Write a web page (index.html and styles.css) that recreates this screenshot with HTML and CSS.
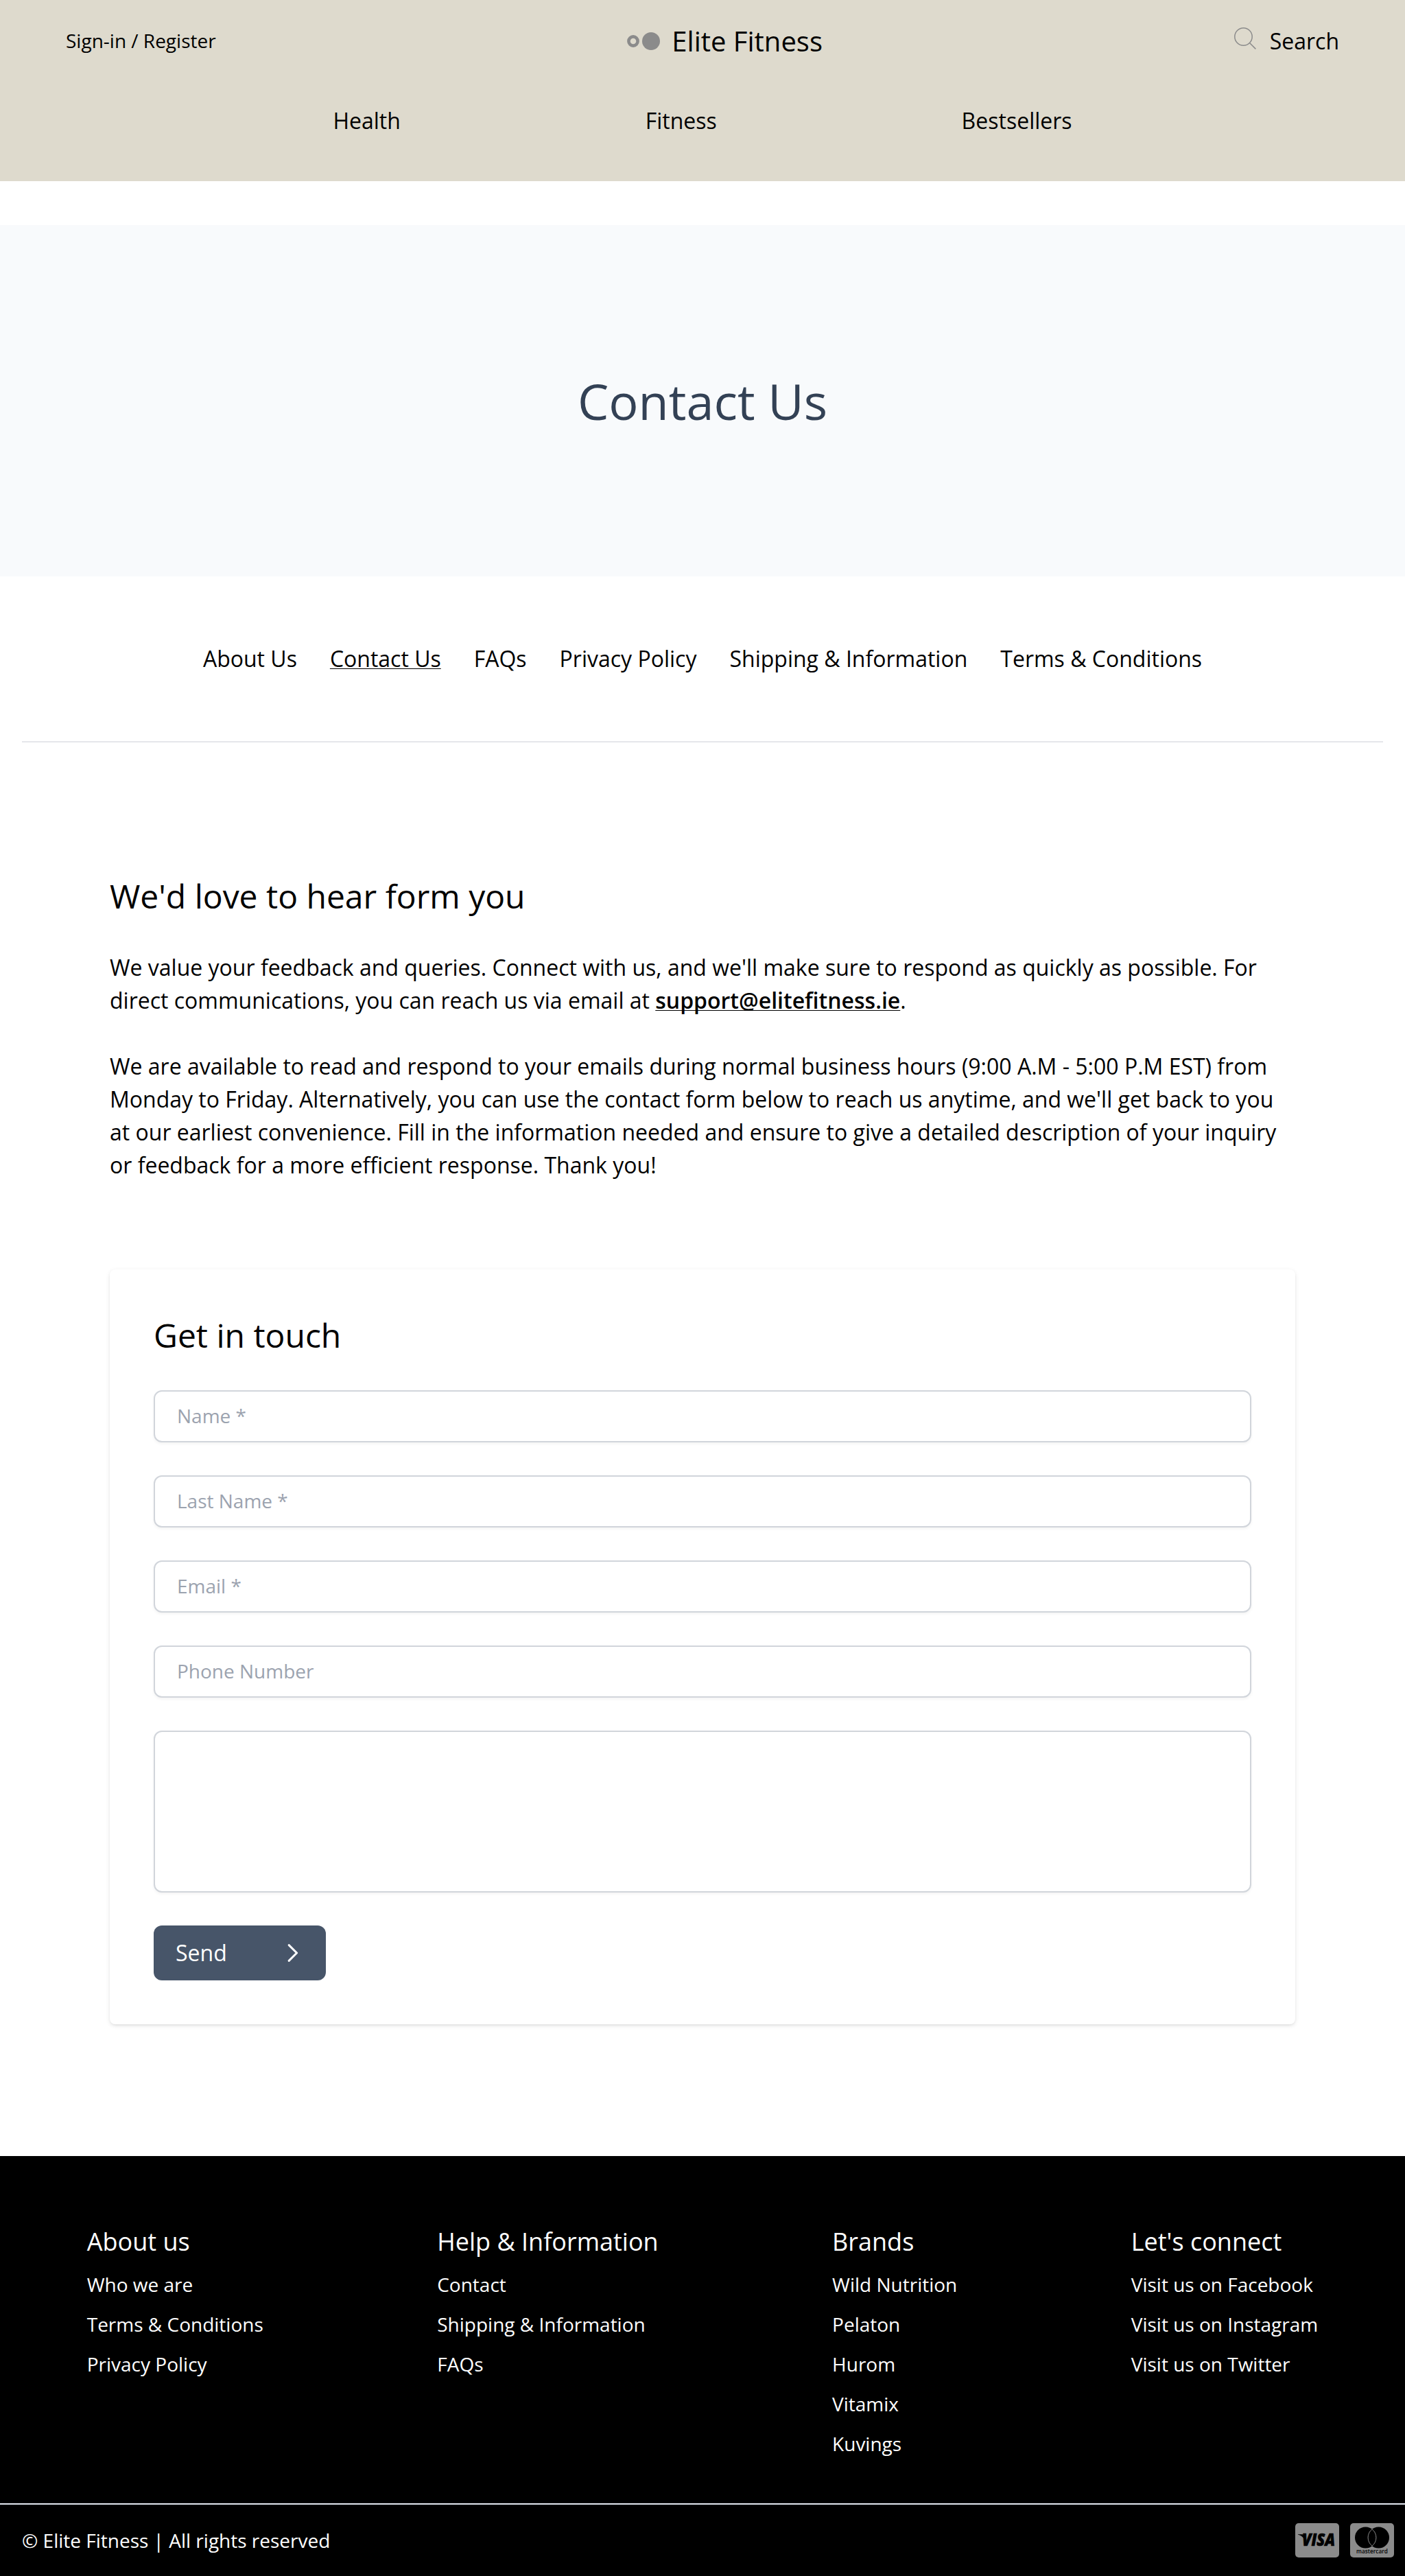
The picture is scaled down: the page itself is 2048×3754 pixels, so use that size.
FILE: index.html
```html
<!DOCTYPE html>
<html lang="en">
<head>
<meta charset="utf-8">
<title>Contact Us | Elite Fitness</title>
<link rel="stylesheet" href="styles.css">
</head>
<body>
<header class="header">
  <div class="header-top">
    <a class="signin">Sign-in / Register</a>
    <a class="brand">
      <svg class="brand-mark" viewBox="0 0 48 26"><circle cx="9" cy="13" r="6.6" fill="none" stroke="#8b8b8b" stroke-width="4.6"/><circle cx="35" cy="13" r="13" fill="#8b8b8b"/></svg>
      <span>Elite Fitness</span>
    </a>
    <a class="search">
      <svg class="search-icon" viewBox="0 0 32 32" fill="none" stroke="#8b8b8b" stroke-width="1.5"><circle cx="13.5" cy="13.5" r="12.7"/><path d="M22.5 22.5 31.4 31.4"/></svg>
      <span>Search</span>
    </a>
  </div>
  <nav class="main-nav"><a>Health</a><a>Fitness</a><a>Bestsellers</a></nav>
</header>

<section class="hero"><h1>Contact Us</h1></section>

<nav class="sub-nav">
  <a>About Us</a><a class="current">Contact Us</a><a>FAQs</a><a>Privacy Policy</a><a>Shipping &amp; Information</a><a>Terms &amp; Conditions</a>
</nav>

<main class="content">
  <h2>We'd love to hear form you</h2>
  <p>We value your feedback and queries. Connect with us, and we'll make sure to respond as quickly as possible. For direct communications, you can reach us via email at <a class="email">support@elitefitness.ie</a>.</p>
  <p>We are available to read and respond to your emails during normal business hours (9:00 A.M - 5:00 P.M EST) from Monday to Friday. Alternatively, you can use the contact form below to reach us anytime, and we'll get back to you at our earliest convenience. Fill in the information needed and ensure to give a detailed description of your inquiry or feedback for a more efficient response. Thank you!</p>

  <form class="card">
    <h2>Get in touch</h2>
    <input class="field" type="text" placeholder="Name *">
    <input class="field" type="text" placeholder="Last Name *">
    <input class="field" type="email" placeholder="Email *">
    <input class="field" type="text" placeholder="Phone Number">
    <textarea class="field message"></textarea>
    <button class="send" type="button">
      <span>Send</span>
      <svg class="chevron" viewBox="0 0 16 26" fill="none" stroke="#fff" stroke-width="3" stroke-linecap="round" stroke-linejoin="round"><path d="M2.2 1.6 13.6 13 2.2 24.4"/></svg>
    </button>
  </form>
</main>

<footer class="footer">
  <div class="footer-columns">
    <div class="column"><h3>About us</h3><a>Who we are</a><a>Terms &amp; Conditions</a><a>Privacy Policy</a></div>
    <div class="column"><h3>Help &amp; Information</h3><a>Contact</a><a>Shipping &amp; Information</a><a>FAQs</a></div>
    <div class="column"><h3>Brands</h3><a>Wild Nutrition</a><a>Pelaton</a><a>Hurom</a><a>Vitamix</a><a>Kuvings</a></div>
    <div class="column"><h3>Let's connect</h3><a>Visit us on Facebook</a><a>Visit us on Instagram</a><a>Visit us on Twitter</a></div>
  </div>
  <div class="footer-bottom">
    <span>© Elite Fitness | All rights reserved</span>
    <div class="payments">
      <svg class="payment" viewBox="0 0 64 50"><rect width="64" height="50" rx="5" fill="#8b8b8b"/><path d="M4 16.3h6.5c1.600 0 2.500.800 2.800 2.200l1.700 7.500c-2-4.500-6-8-11-9.300z"/><text x="10" y="33.300" class="visa" textLength="48" lengthAdjust="spacingAndGlyphs">VISA</text></svg>
      <svg class="payment" viewBox="0 0 64 50"><rect width="64" height="50" rx="5" fill="#8b8b8b"/><circle cx="22.5" cy="21" r="15.5"/><circle cx="41.5" cy="21" r="15.5"/><path d="M32 8.800a15.500 15.500 0 0 1 0 24.400a15.500 15.500 0 0 1 0-24.400z" fill="#000" stroke="#8b8b8b" stroke-width="1"/><text x="9" y="44" class="mastercard" textLength="46" lengthAdjust="spacingAndGlyphs">mastercard</text></svg>
    </div>
  </div>
</footer>
</body>
</html>
```
FILE: styles.css
```css
* { box-sizing: border-box; }
body { margin: 0; background: #fff; color: #000; font: 32px/48px "Open Sans", sans-serif; }
h1, h2, h3, p { margin: 0; font-weight: 400; }

.header { height: 264px; background: #dedacd; }
.header-top { display: flex; align-items: center; justify-content: space-between; height: 120px; padding: 0 96px; }
.signin { padding-bottom: 2px; font-size: 28px; line-height: 40px; }
.brand { display: flex; align-items: center; gap: 17px; font-size: 40px; line-height: 56px; }
.brand-mark { display: block; width: 48px; height: 26px; }
.search { display: flex; align-items: center; gap: 20px; }
.search-icon { display: block; width: 32px; height: 32px; margin-bottom: 8px; }
.main-nav { display: flex; justify-content: space-around; width: 1434px; margin: 0 auto; padding-top: 32px; }

.hero { display: flex; align-items: center; justify-content: center; height: 512px; margin-top: 64px; background: #f8fafc; color: #334155; }
.hero h1 { font-size: 72px; line-height: 80px; }

.sub-nav { display: flex; justify-content: center; gap: 48px; margin: 0 32px; padding: 96px 0; border-bottom: 2px solid #e5e7eb; }
.current, .email { text-decoration: underline 1px; text-underline-offset: 2px; text-decoration-skip-ink: none; }

.content { padding: 192px 160px; }
.content h2 { font-size: 48px; line-height: 64px; }
.content > h2 { margin-bottom: 48px; }
.content p { margin-bottom: 48px; }
.email { font-weight: 600; }

.card { display: flex; flex-direction: column; gap: 48px; margin-top: 128px; padding: 64px; border-radius: 8px; box-shadow: 0 2px 6px rgba(0, 0, 0, .1), 0 2px 4px -2px rgba(0, 0, 0, .1); }
.field { display: block; width: 100%; height: 76px; padding: 15px 32px 17px; border: 2px solid #d1d5db; border-radius: 12px; background: #fff; box-shadow: 0 2px 4px rgba(0, 0, 0, .05); color: #000; font: 28px/40px "Open Sans", sans-serif; }
.field::placeholder { color: #9ca3af; opacity: 1; }
.message { height: 236px; resize: none; }
.send { display: flex; align-items: center; justify-content: space-between; width: 251px; height: 80px; padding: 0 40px 0 32px; border: 0; border-radius: 12px; background: #475569; color: #fff; font: 32px/48px "Open Sans", sans-serif; }
.chevron { display: block; width: 16px; height: 26px; }

.footer { background: #000; color: #fff; }
.footer-columns { display: flex; justify-content: space-around; height: 506px; padding-top: 97px; }
.column { display: flex; flex-direction: column; gap: 18px; }
.column h3 { margin-bottom: -4px; font-size: 36px; line-height: 56px; }
.column a { font-size: 28px; line-height: 40px; }
.footer-bottom { display: flex; align-items: center; justify-content: space-between; height: 106px; padding: 0 16px 0 32px; border-top: 2px solid #e2e8f0; font-size: 28px; line-height: 40px; }
.payments { display: flex; gap: 16px; }
.payment { display: block; width: 64px; height: 50px; }
.visa { font: italic 800 24px "Open Sans", sans-serif; stroke: #000; stroke-width: .7px; }
.mastercard { font: 600 9px "Open Sans", sans-serif; }
```
